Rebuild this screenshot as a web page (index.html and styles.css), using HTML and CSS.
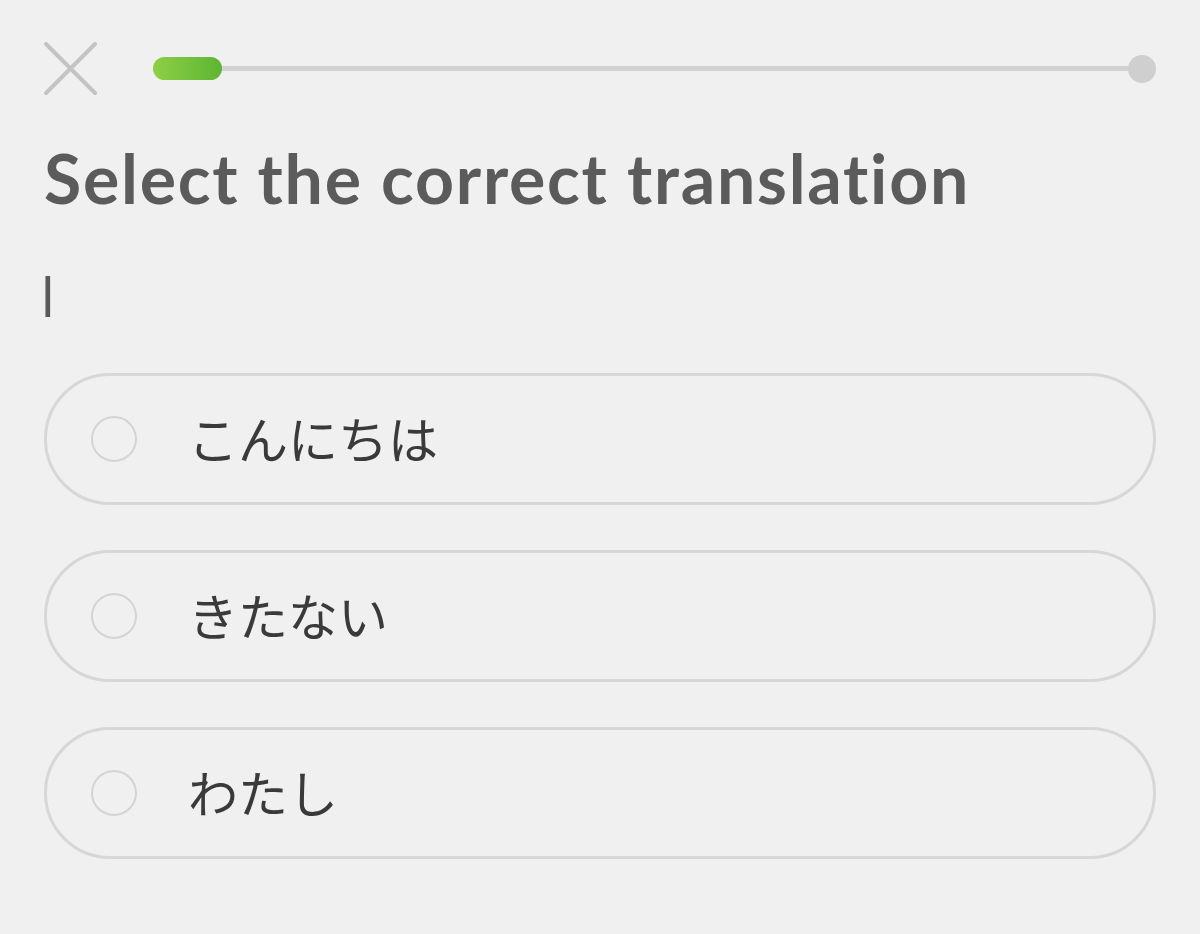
FILE: index.html
```html
<!DOCTYPE html>
<html lang="en">
<head>
<meta charset="utf-8">
<link rel="stylesheet" href="styles.css">
</head>
<body>
<div class="screen">
  <header class="topbar">
    <svg class="close" width="54" height="54" viewBox="0 0 54 54">
      <path d="M2 2 L51 51 M51 2 L2 51" stroke="#c4c4c4" stroke-width="4" stroke-linecap="round" fill="none"/>
    </svg>
    <div class="progress">
      <div class="track"></div>
      <div class="fill"></div>
      <div class="end"></div>
    </div>
  </header>
  <h1 class="title">Select the correct translation</h1>
  <div class="prompt">I</div>
  <div class="options">
    <div class="option"><span class="radio"></span><span class="label">こんにちは</span></div>
    <div class="option"><span class="radio"></span><span class="label">きたない</span></div>
    <div class="option"><span class="radio"></span><span class="label">わたし</span></div>
  </div>
</div>
</body>
</html>
```
FILE: styles.css
```css
html, body {
  margin: 0;
  padding: 0;
  background: #f0f0f0;
}
.screen {
  width: 1200px;
  height: 934px;
  box-sizing: border-box;
  padding: 42px 44px 0 44px;
  font-family: Lato, "Open Sans", sans-serif;
}
.topbar {
  display: flex;
  align-items: center;
  height: 54px;
}
.close {
  display: block;
  flex: none;
}
.progress {
  position: relative;
  flex: 1;
  margin-left: 55px;
  height: 28px;
}
.track {
  position: absolute;
  left: 0;
  right: 14px;
  top: 11px;
  height: 5px;
  background: #d2d2d2;
}
.fill {
  position: absolute;
  left: 0;
  top: 2px;
  width: 69px;
  height: 23px;
  border-radius: 12px;
  background: linear-gradient(90deg, #8dd046, #5db533);
}
.end {
  position: absolute;
  right: 0;
  top: 0;
  width: 28px;
  height: 28px;
  border-radius: 50%;
  background: #cfcfcf;
}
.title {
  margin: 42px 0 0 0;
  font-size: 68px;
  font-weight: 700;
  color: #5b5b5b;
  line-height: 80px;
  letter-spacing: 1.75px;
}
.prompt {
  margin-top: 47px;
  height: 60px;
  font-family: "Open Sans", sans-serif;
  font-weight: 400;
  font-size: 56px;
  line-height: 60px;
  color: #5a5a5a;
  margin-left: -4px;
}
.options {
  margin-top: 48px;
  display: flex;
  flex-direction: column;
  gap: 45px;
}
.option {
  display: flex;
  align-items: center;
  height: 132px;
  box-sizing: border-box;
  border: 3px solid #d7d7d7;
  border-radius: 66px;
  padding-left: 44px;
}
.radio {
  width: 46px;
  height: 46px;
  box-sizing: border-box;
  border: 2.5px solid #d4d4d4;
  border-radius: 50%;
  flex: none;
}
.label {
  margin-left: 51px;
  font-family: "Noto Sans CJK JP", sans-serif;
  font-size: 50px;
  font-weight: 400;
  color: #3a3a3a;
  line-height: 60px;
  position: relative;
  top: -2px;
}
```
